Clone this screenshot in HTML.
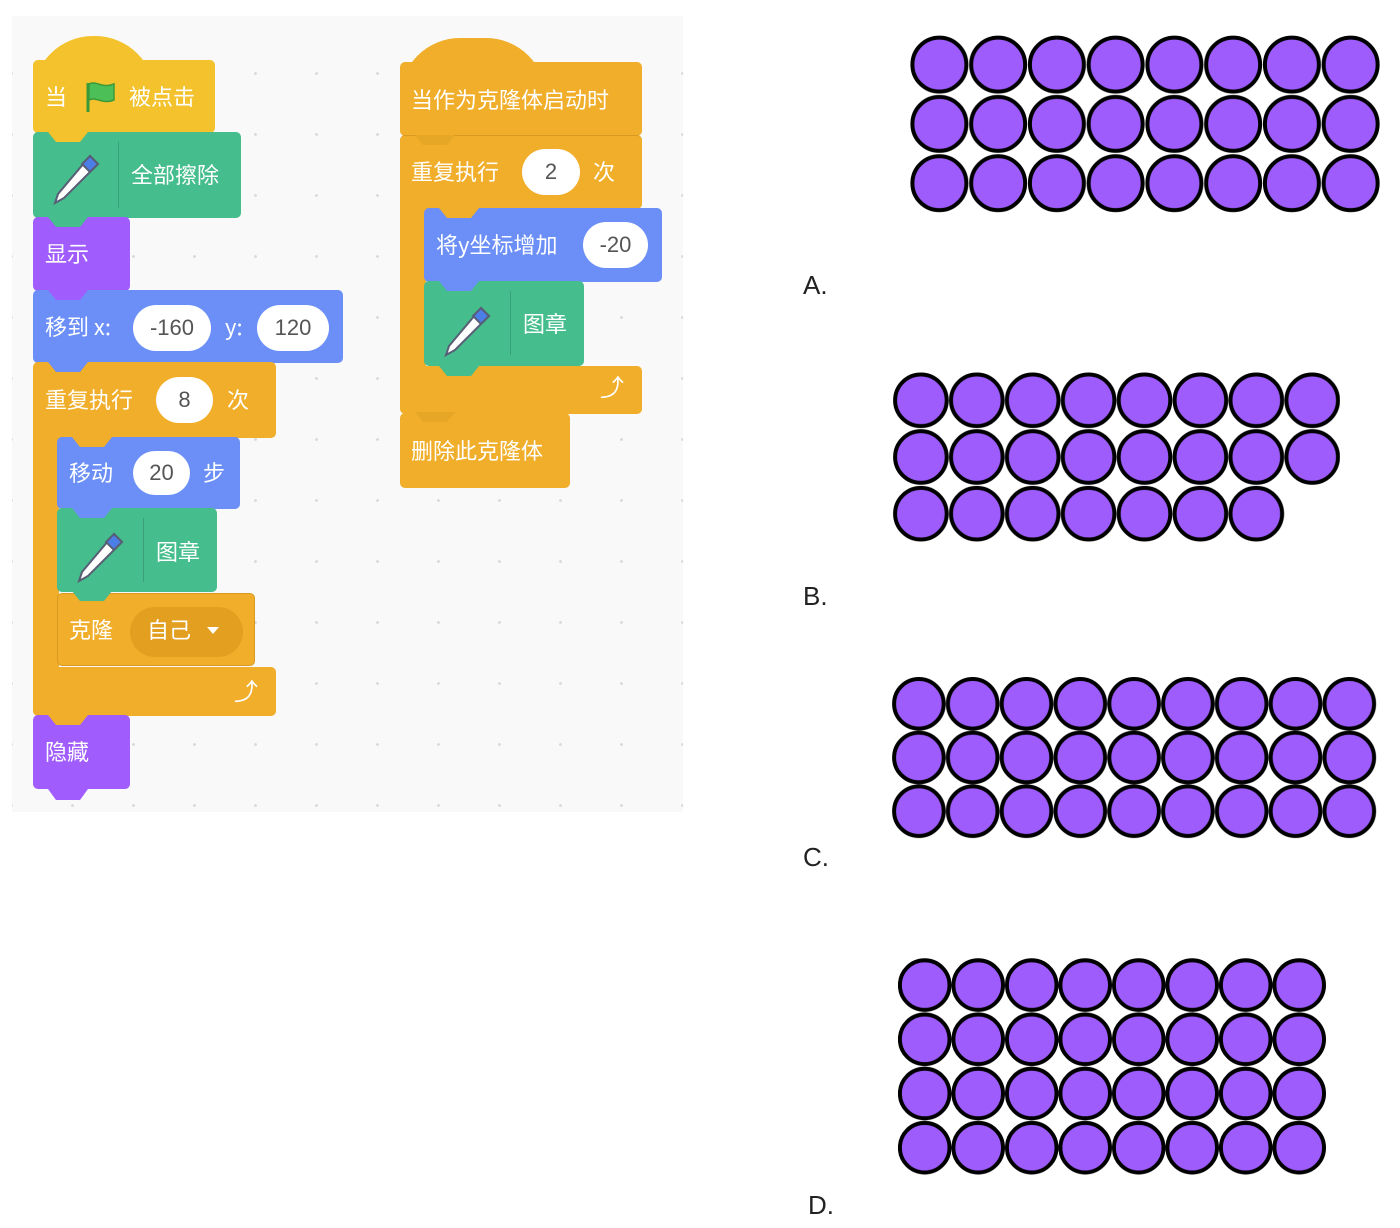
<!DOCTYPE html>
<html><head><meta charset="utf-8"><style>
*{margin:0;padding:0;box-sizing:border-box}
body{width:1400px;height:1228px;background:#fff;position:relative;overflow:hidden;font-family:"Liberation Sans","Noto Sans CJK SC",sans-serif}
.canvas{position:absolute;left:12px;top:16px;width:671px;height:796px;background:#f9f9f9;background-image:radial-gradient(circle,#d8d8d8 1.2px,transparent 1.6px);background-size:61px 61px;background-position:30px 27px}
.b{position:absolute;border-radius:5px;color:#fff;font-size:22px;font-family:"Noto Sans CJK SC",sans-serif;display:flex;align-items:center;white-space:nowrap}
.y{background:#f3c22d}.o{background:#f0ae2a}.g{background:#45bd8c}.p{background:#a05cfc}.bl{background:#6b8ff7}
.inp{position:absolute;background:#fff;border-radius:24px;color:#555;font-size:22px;font-family:"Liberation Sans",sans-serif;display:flex;align-items:center;justify-content:center}
.t{position:absolute;color:#fff;font-size:22px;font-family:"Noto Sans CJK SC",sans-serif;line-height:1}
.tab{position:absolute;width:40px;height:10px;clip-path:polygon(0 0,100% 0,80% 100%,20% 100%)}
.sep{position:absolute;width:1px;background:rgba(0,0,0,.15)}
.lbl{position:absolute;font-size:26px;color:#222;font-family:"Liberation Sans",sans-serif}
</style></head><body>
<div class="canvas"></div>

<!-- left hat -->
<div class="b y" style="left:33px;top:36px;width:122px;height:60px;border-radius:60px 60px 0 0"></div>
<div class="b y" style="left:33px;top:60px;width:182px;height:73px"></div>
<div class="t" style="left:45px;top:85px">当</div>
<svg style="position:absolute;left:84px;top:80px" width="34" height="34" viewBox="0 0 34 34"><path d="M4 3 V32" stroke="#3a9a3a" stroke-width="3"/><path d="M5 4 C12 0 18 9 30 4 V20 C18 25 12 16 5 20Z" fill="#4cbf56" stroke="#3a9a3a" stroke-width="1.5"/></svg>
<div class="t" style="left:129px;top:85px">被点击</div>

<!-- clear -->
<div class="b g" style="left:33px;top:132px;width:208px;height:86px"></div>
<div class="tab y" style="left:48px;top:132px"></div>
<div class="sep" style="left:118px;top:142px;height:66px"></div>
<svg style="position:absolute;left:50px;top:152px" width="52" height="56" viewBox="0 0 52 56"><path d="M40 4 L48 12 L14 46 L5 51 L8 42Z" fill="#fff" stroke="#575e75" stroke-width="2"/><path d="M40 4 L48 12 L40 20 L32 12Z" fill="#4c7ee8" stroke="#575e75" stroke-width="2"/></svg>
<div class="t" style="left:131px;top:163px">全部擦除</div>

<!-- show -->
<div class="b p" style="left:33px;top:217px;width:97px;height:74px"></div>
<div class="tab g" style="left:48px;top:217px"></div>
<div class="t" style="left:45px;top:242px">显示</div>

<!-- goto -->
<div class="b bl" style="left:33px;top:290px;width:310px;height:73px"></div>
<div class="tab p" style="left:48px;top:290px"></div>
<div class="t" style="left:45px;top:315px">移到 x:</div>
<div class="inp" style="left:133px;top:305px;width:78px;height:46px">-160</div>
<div class="t" style="left:225px;top:315px">y:</div>
<div class="inp" style="left:257px;top:305px;width:72px;height:46px">120</div>

<!-- repeat 8 -->
<div class="b o" style="left:33px;top:362px;width:243px;height:76px"></div>
<div class="b o" style="left:33px;top:430px;width:26px;height:250px;border-radius:0"></div>
<div class="b o" style="left:33px;top:667px;width:243px;height:49px"></div>
<div class="tab bl" style="left:48px;top:362px"></div>
<div class="t" style="left:45px;top:388px">重复执行</div>
<div class="inp" style="left:156px;top:377px;width:57px;height:46px">8</div>
<div class="t" style="left:227px;top:388px">次</div>
<div class="t" style="left:234px;top:680px;font-size:24px;font-family:'DejaVu Sans',sans-serif">⤴</div>

<div class="b bl" style="left:57px;top:437px;width:183px;height:72px"></div>
<div class="tab o" style="left:72px;top:437px"></div>
<div class="t" style="left:69px;top:461px">移动</div>
<div class="inp" style="left:133px;top:451px;width:57px;height:44px">20</div>
<div class="t" style="left:203px;top:461px">步</div>

<div class="b g" style="left:57px;top:508px;width:160px;height:84px"></div>
<div class="tab bl" style="left:72px;top:508px"></div>
<div class="sep" style="left:143px;top:518px;height:64px"></div>
<svg style="position:absolute;left:74px;top:530px" width="52" height="56" viewBox="0 0 52 56"><path d="M40 4 L48 12 L14 46 L5 51 L8 42Z" fill="#fff" stroke="#575e75" stroke-width="2"/><path d="M40 4 L48 12 L40 20 L32 12Z" fill="#4c7ee8" stroke="#575e75" stroke-width="2"/></svg>
<div class="t" style="left:156px;top:540px">图章</div>

<div class="b o" style="left:57px;top:593px;width:198px;height:73px;border:1px solid #d99a22"></div>
<div class="tab g" style="left:72px;top:591px"></div>
<div class="t" style="left:69px;top:618px">克隆</div>
<div style="position:absolute;left:130px;top:607px;width:113px;height:50px;border-radius:25px;background:#e39f1f"></div>
<div class="t" style="left:147px;top:618px">自己</div>
<div style="position:absolute;left:207px;top:627px;width:0;height:0;border-left:6px solid transparent;border-right:6px solid transparent;border-top:7px solid #fff"></div>

<div class="b p" style="left:33px;top:715px;width:97px;height:74px"></div>
<div class="tab o" style="left:48px;top:715px"></div>
<div class="tab p" style="left:48px;top:789px;height:11px"></div>
<div class="t" style="left:45px;top:740px">隐藏</div>

<!-- right stack -->
<div class="b o" style="left:400px;top:38px;width:146px;height:60px;border-radius:70px 70px 0 0"></div>
<div class="b o" style="left:400px;top:62px;width:242px;height:74px"></div>
<div class="t" style="left:411px;top:88px">当作为克隆体启动时</div>

<div class="b o" style="left:400px;top:135px;width:242px;height:74px;border-top:1px solid #d99a22"></div>
<div class="tab o" style="left:415px;top:135px;background:#e6a626"></div>
<div class="t" style="left:411px;top:160px">重复执行</div>
<div class="inp" style="left:522px;top:149px;width:58px;height:46px">2</div>
<div class="t" style="left:593px;top:160px">次</div>
<div class="b o" style="left:400px;top:200px;width:26px;height:180px;border-radius:0"></div>
<div class="b o" style="left:400px;top:366px;width:242px;height:48px"></div>
<div class="t" style="left:600px;top:376px;font-size:24px;font-family:'DejaVu Sans',sans-serif">⤴</div>

<div class="b bl" style="left:424px;top:208px;width:238px;height:74px"></div>
<div class="tab o" style="left:439px;top:208px"></div>
<div class="t" style="left:436px;top:233px">将y坐标增加</div>
<div class="inp" style="left:583px;top:222px;width:65px;height:46px">-20</div>

<div class="b g" style="left:424px;top:281px;width:160px;height:85px"></div>
<div class="tab bl" style="left:439px;top:281px"></div>
<div class="tab g" style="left:439px;top:366px"></div>
<div class="sep" style="left:510px;top:291px;height:64px"></div>
<svg style="position:absolute;left:441px;top:304px" width="52" height="56" viewBox="0 0 52 56"><path d="M40 4 L48 12 L14 46 L5 51 L8 42Z" fill="#fff" stroke="#575e75" stroke-width="2"/><path d="M40 4 L48 12 L40 20 L32 12Z" fill="#4c7ee8" stroke="#575e75" stroke-width="2"/></svg>
<div class="t" style="left:523px;top:312px">图章</div>

<div class="b o" style="left:400px;top:413px;width:170px;height:75px"></div>
<div class="tab o" style="left:415px;top:412px;background:#e6a626"></div>
<div class="t" style="left:411px;top:439px">删除此克隆体</div>

<!-- circle grids -->
<svg style="position:absolute;left:0;top:0" width="1400" height="1228">
<defs>
<pattern id="pa" x="910" y="35" width="58.75" height="59.3" patternUnits="userSpaceOnUse"><circle cx="29.4" cy="29.6" r="27" fill="#9d5cfb" stroke="#000" stroke-width="4"/></pattern>
<pattern id="pb" x="893" y="372" width="55.9" height="56.7" patternUnits="userSpaceOnUse"><circle cx="27.9" cy="28.3" r="25.8" fill="#9d5cfb" stroke="#000" stroke-width="4"/></pattern>
<pattern id="pc" x="892" y="677" width="53.8" height="53.7" patternUnits="userSpaceOnUse"><circle cx="26.9" cy="26.8" r="24.8" fill="#9d5cfb" stroke="#000" stroke-width="4"/></pattern>
<pattern id="pd" x="898" y="958" width="53.5" height="54.2" patternUnits="userSpaceOnUse"><circle cx="26.7" cy="27.1" r="24.8" fill="#9d5cfb" stroke="#000" stroke-width="4"/></pattern>
</defs>
<rect x="910" y="35" width="470" height="178" fill="url(#pa)"/>
<rect x="893" y="372" width="447" height="113.4" fill="url(#pb)"/>
<rect x="893" y="485.4" width="391.3" height="56.7" fill="url(#pb)"/>
<rect x="892" y="677" width="484.2" height="161.1" fill="url(#pc)"/>
<rect x="898" y="958" width="428" height="216.8" fill="url(#pd)"/>
</svg>

<div class="lbl" style="left:803px;top:270px">A.</div>
<div class="lbl" style="left:803px;top:581px">B.</div>
<div class="lbl" style="left:803px;top:842px">C.</div>
<div class="lbl" style="left:808px;top:1190px">D.</div>
</body></html>
